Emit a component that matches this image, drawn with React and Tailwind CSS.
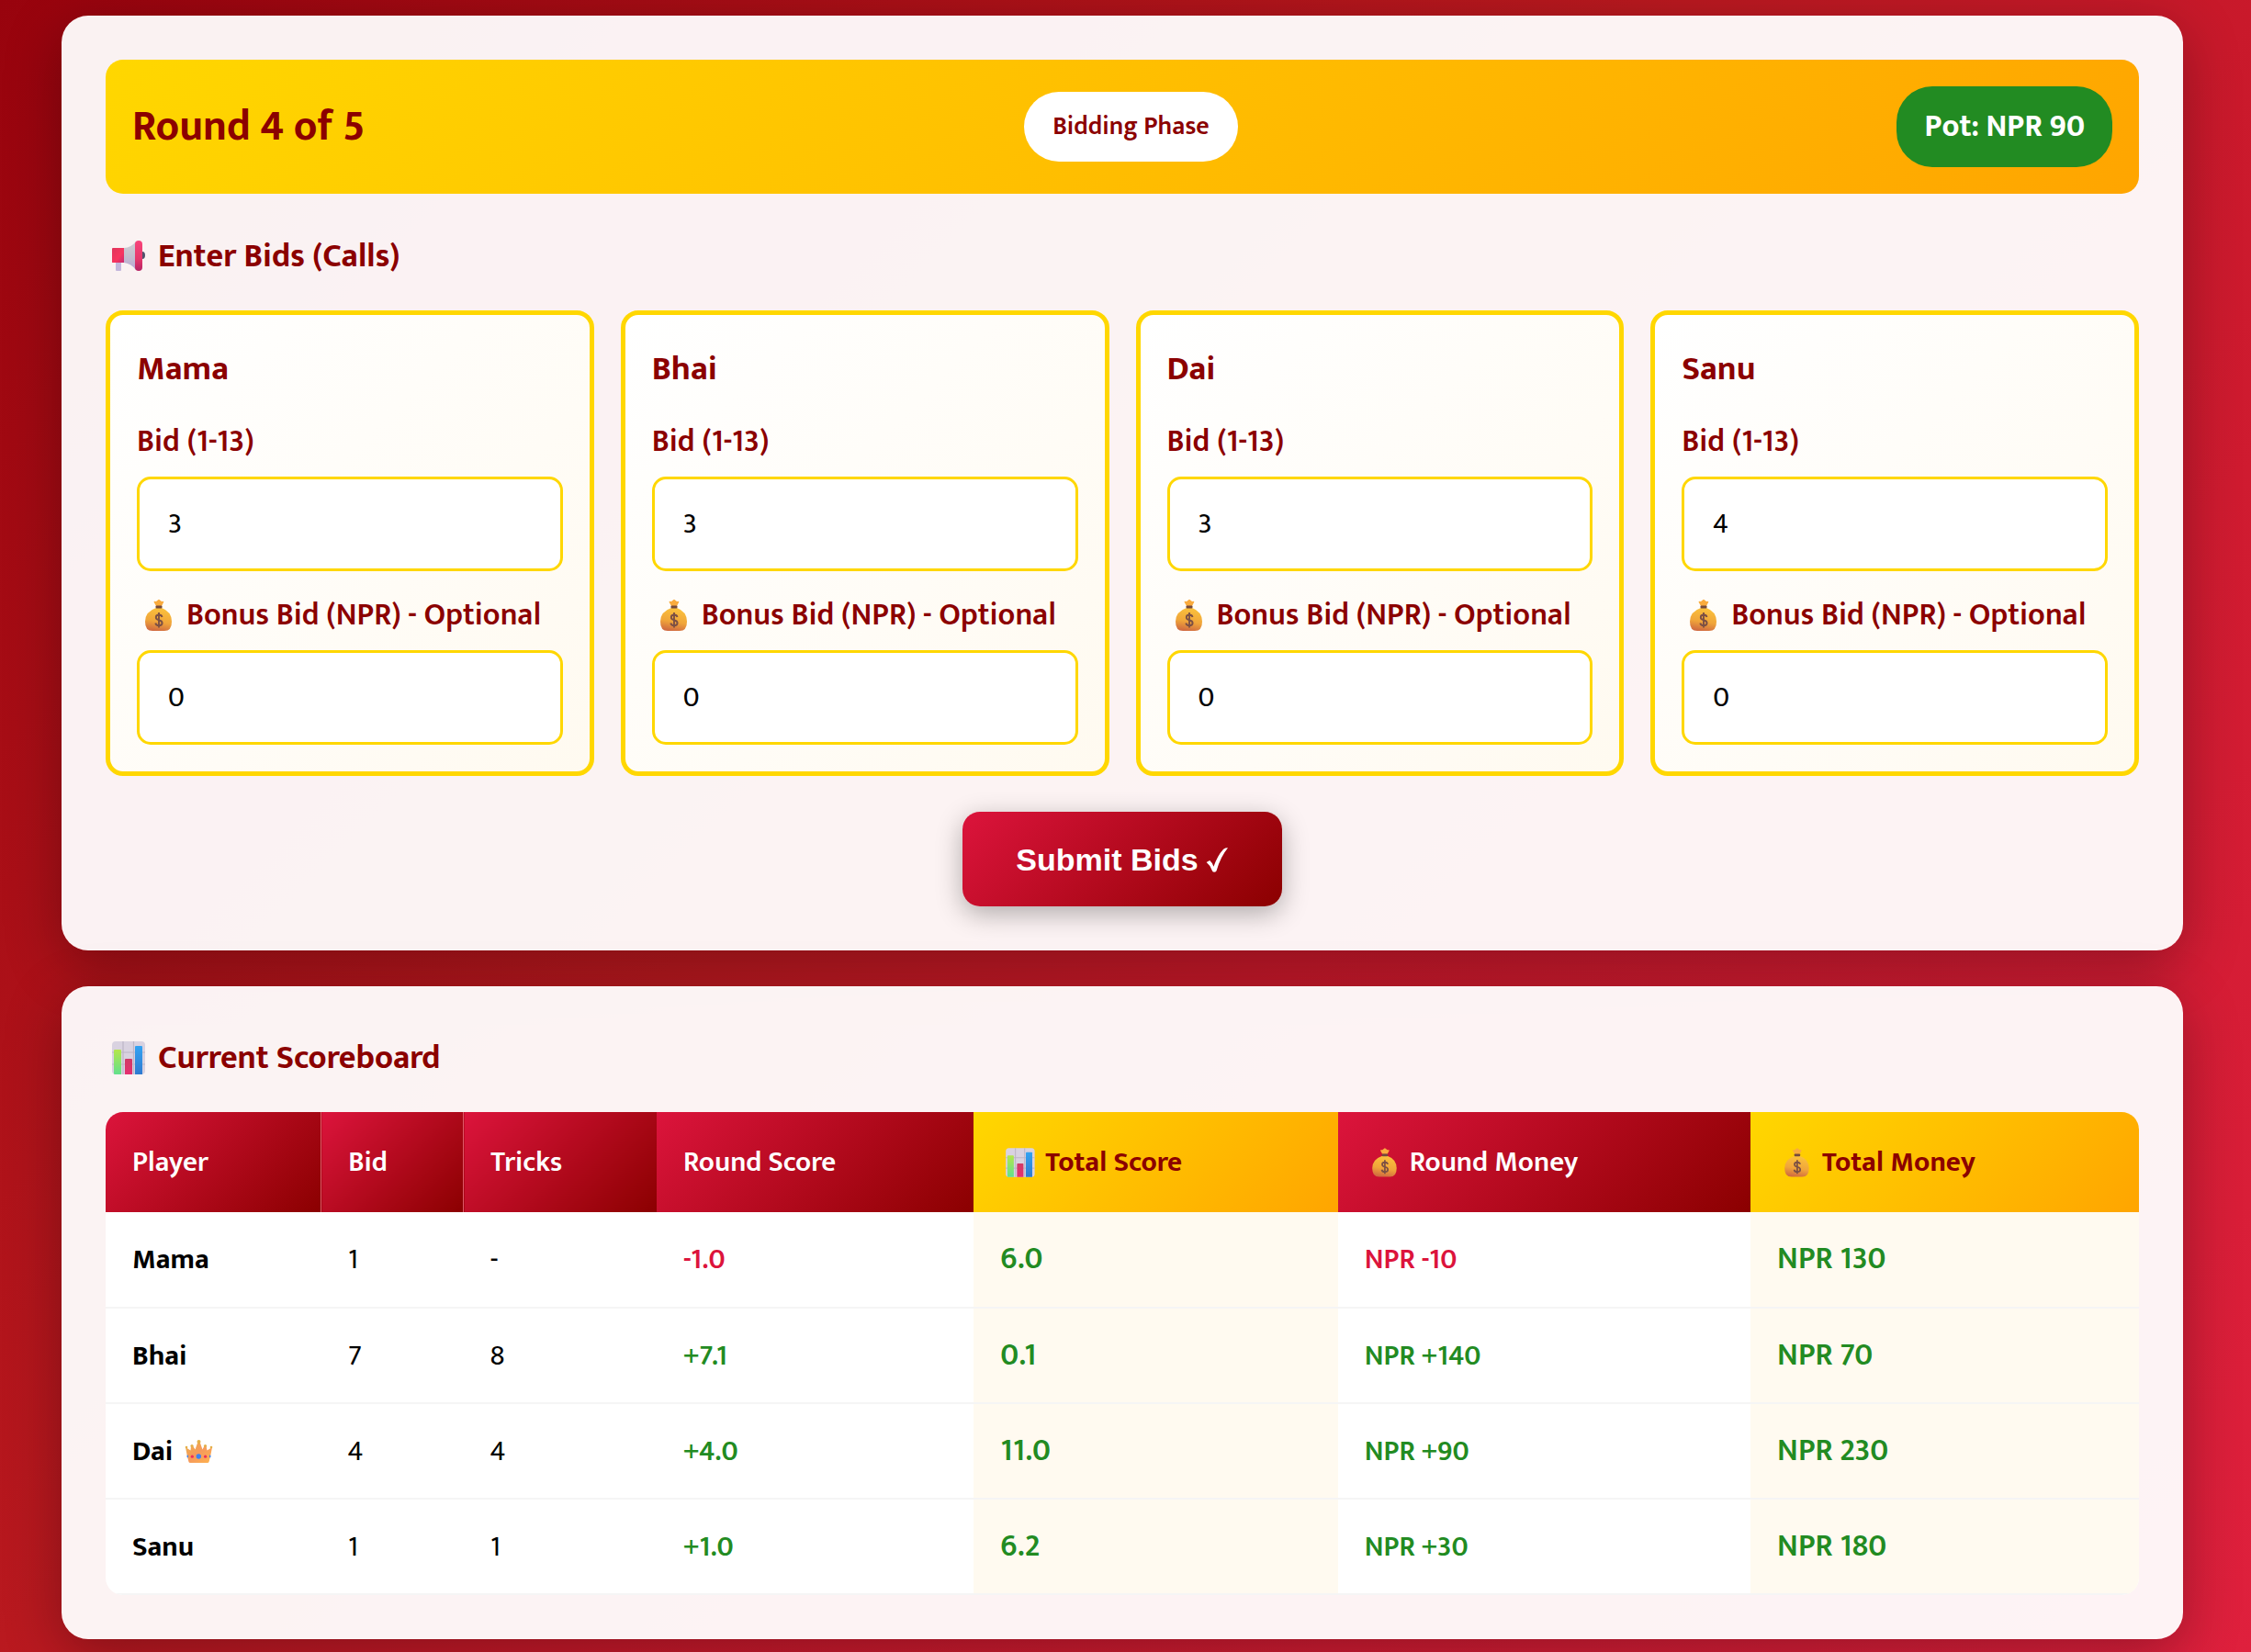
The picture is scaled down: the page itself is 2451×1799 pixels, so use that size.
import React from "react";

const players = [
  { name: "Mama", bid: 3, bonus: 0 },
  { name: "Bhai", bid: 3, bonus: 0 },
  { name: "Dai", bid: 3, bonus: 0 },
  { name: "Sanu", bid: 4, bonus: 0 },
];

const scores = [
  { name: "Mama", bid: "1", tricks: "-", round: "-1.0", total: "6.0", money: "NPR -10", totalMoney: "NPR 130", lost: true },
  { name: "Bhai", bid: "7", tricks: "8", round: "+7.1", total: "0.1", money: "NPR +140", totalMoney: "NPR 70" },
  { name: "Dai", bid: "4", tricks: "4", round: "+4.0", total: "11.0", money: "NPR +90", totalMoney: "NPR 230", leader: true },
  { name: "Sanu", bid: "1", tricks: "1", round: "+1.0", total: "6.2", money: "NPR +30", totalMoney: "NPR 180" },
];

function Megaphone({ className }) {
  return (
    <svg viewBox="5 4 48 48" className={className} aria-hidden="true">
      <defs>
        <linearGradient id="mgBody" x1="0" y1="0" x2="1" y2="1">
          <stop offset="0" stopColor="#e0355c" />
          <stop offset="0.6" stopColor="#f8355f" />
          <stop offset="1" stopColor="#c42a72" />
        </linearGradient>
        <linearGradient id="mgCone" x1="0" y1="0" x2="0" y2="1">
          <stop offset="0" stopColor="#cfcdd2" />
          <stop offset="0.5" stopColor="#c4c0cf" />
          <stop offset="1" stopColor="#b9a6d6" />
        </linearGradient>
        <linearGradient id="mgRim" x1="0" y1="0" x2="0" y2="1">
          <stop offset="0" stopColor="#f8447a" />
          <stop offset="0.6" stopColor="#e6386c" />
          <stop offset="1" stopColor="#b52265" />
        </linearGradient>
      </defs>
      <rect x="16" y="34" width="6" height="10" rx="1" fill="#c3b6dc" />
      <ellipse cx="45" cy="27" rx="3" ry="4" fill="#50506a" />
      <path d="M25 19Q33 18.500 38 12V43Q33 36 25 35Z" fill="url(#mgCone)" />
      <path d="M12 19.500Q12 19 13 19H25V35H13Q12 35 12 34.500Z" fill="url(#mgBody)" />
      <rect x="37" y="11" width="8" height="33" rx="4" fill="url(#mgRim)" />
    </svg>
  );
}

function BarChart({ className }) {
  return (
    <svg viewBox="5 6 48 48" className={className} aria-hidden="true">
      <defs>
        <linearGradient id="chGreen" x1="0" y1="0" x2="0" y2="1">
          <stop offset="0" stopColor="#b4e64a" />
          <stop offset="1" stopColor="#62e08c" />
        </linearGradient>
        <linearGradient id="chPink" x1="0" y1="0" x2="0" y2="1">
          <stop offset="0" stopColor="#d03a66" />
          <stop offset="1" stopColor="#e62f70" />
        </linearGradient>
        <linearGradient id="chBlue" x1="0" y1="0" x2="0" y2="1">
          <stop offset="0" stopColor="#33a3f2" />
          <stop offset="1" stopColor="#2f7ad0" />
        </linearGradient>
      </defs>
      <rect x="12" y="12" width="36" height="36" rx="4" fill="#d9d2e0" />
      <path d="M24 12V48M35.500 12V48M12 24H48M12 37H48" stroke="#bdb6c6" strokeWidth="1.200" fill="none" />
      <path d="M14 22Q14 21 15 21H21Q22 21 22 22V48H15Q14 48 14 47Z" fill="url(#chGreen)" />
      <path d="M26 32Q26 31 27 31H33Q34 31 34 32V48H26Z" fill="url(#chPink)" />
      <path d="M37 18Q37 17 38 17H44Q45 17 45 18V48H37Z" fill="url(#chBlue)" />
    </svg>
  );
}

function MoneyBag({ className }) {
  return (
    <svg viewBox="4 5 46 46" className={className} aria-hidden="true">
      <defs>
        <linearGradient id="bagBody" x1="0.6" y1="0" x2="0.4" y2="1">
          <stop offset="0" stopColor="#fbc23c" />
          <stop offset="0.6" stopColor="#f0a53a" />
          <stop offset="1" stopColor="#d06a40" />
        </linearGradient>
      </defs>
      <path d="M25 18L22.500 13.500Q22.500 12.500 25 13L27.500 11Q28 10.700 28.500 11L31 13Q33.500 12.500 33.300 13.500L31 18Z" fill="#f9ab3e" />
      <path d="M25 20H31Q42 24 42 35Q42 45 34 45H21Q13 45 13 35Q13 24 25 20Z" fill="url(#bagBody)" />
      <rect x="24.500" y="17.500" width="7" height="3" rx="1" fill="#74493d" />
      <path d="M31.500 30Q31 27.500 28 27.500Q24.800 27.500 24.800 30.200Q24.800 32.500 28 33.200Q31.600 34 31.600 36.500Q31.600 39.200 28 39.200Q24.800 39.200 24.300 36.500M28 25V41.500" fill="none" stroke="#7c5044" strokeWidth="1.900" />
    </svg>
  );
}

function Crown({ className }) {
  return (
    <svg viewBox="5 -2 42 42" className={className} aria-hidden="true">
      <defs>
        <linearGradient id="crBody" x1="0" y1="0" x2="1" y2="1">
          <stop offset="0" stopColor="#eab04a" />
          <stop offset="0.5" stopColor="#f69a5c" />
          <stop offset="1" stopColor="#ffb44e" />
        </linearGradient>
      </defs>
      <path d="M12 15L17.500 18.500L18 13.500H20L22.500 17.500L25.500 9H27.500L30.500 17.500L32.500 13.500H34.500L35.500 18.500L41 15Q39.500 24 37.500 31Q37.200 32 36 32H17Q15.800 32 15.500 31Q13.500 24 12 15Z" fill="url(#crBody)" />
      <circle cx="26.500" cy="9" r="2" fill="#e3b04a" />
      <circle cx="19" cy="13.500" r="1.600" fill="#e3b04a" />
      <circle cx="33.500" cy="13.500" r="1.600" fill="#e3b04a" />
      <circle cx="13" cy="15" r="1.300" fill="#e3b04a" />
      <circle cx="40" cy="15" r="1.300" fill="#e3b04a" />
      <circle cx="26.300" cy="25" r="2.700" fill="#3d82ee" />
      <circle cx="19.300" cy="25.200" r="1.600" fill="#ee2f5c" />
      <circle cx="33.600" cy="25.200" r="1.600" fill="#ee2f5c" />
      <ellipse cx="14.300" cy="25" rx="0.800" ry="1.400" fill="#3d82ee" />
      <ellipse cx="38.700" cy="25" rx="0.800" ry="1.400" fill="#3d82ee" />
    </svg>
  );
}

function CheckMark({ className }) {
  return (
    <svg viewBox="941 221 75 83" className={className} aria-hidden="true">
      <path d="M942 270L953 264Q961 270 966 285Q979 247 999 226Q1005 222 1014 222Q989 252 976 298Q975 303 968 303Q962 303 961 298Q955 280 942 270Z" fill="currentColor" />
    </svg>
  );
}

function Panel({ children }) {
  return (
    <section className="rounded-[29px] bg-white/95 p-12 shadow-[0_16px_62px_rgba(0,0,0,0.3)]">{children}</section>
  );
}

function Field({ id, label, icon, value }) {
  return (
    <div className="mt-5">
      <label htmlFor={id} className="flex items-center gap-2 text-[34px] leading-[56px] font-semibold text-[#8b0000]">
        {icon}
        {label}
      </label>
      <input
        id={id}
        type="number"
        defaultValue={value}
        className="mt-2.5 block h-[103px] w-full rounded-[15px] border-3 border-[#ffd700] bg-white px-[31px] text-[31px] text-black"
      />
    </div>
  );
}

function PlayerCard({ player }) {
  const id = player.name.toLowerCase();
  return (
    <article className="rounded-[19px] border-5 border-[#ffd700] bg-linear-[135deg,#ffffff,#fffaf0] p-[29px]">
      <h4 className="text-[37px] leading-[61px] font-bold text-[#8b0000]">{player.name}</h4>
      <Field id={`${id}-bid`} label="Bid (1-13)" value={player.bid} />
      <Field
        id={`${id}-bonus`}
        label="Bonus Bid (NPR) - Optional"
        icon={<MoneyBag className="size-[46px] shrink-0" />}
        value={player.bonus}
      />
    </article>
  );
}

function HeadCell({ children, gold, line = "" }) {
  const tone = gold
    ? "bg-linear-[135deg,#ffd700,#ffa500] font-bold text-[#8b0000]"
    : "bg-linear-[135deg,#dc143c,#8b0000] font-semibold text-white";
  return (
    <th scope="col" className={`${tone} ${line} px-[29px] py-[29px] text-left`}>
      <span className="flex items-center gap-[7px]">{children}</span>
    </th>
  );
}

export default function App() {
  return (
    <div className="min-h-screen bg-linear-[135deg,#98030d,#b9191f_42%,#c9192b_58%,#df203d] pt-[17px] pr-[74px] pb-3 pl-[67px] font-['Mukta','Open_Sans',sans-serif] text-black">
      <main className="flex flex-col gap-[39px]">
        <Panel>
          <header className="flex items-center justify-between rounded-[19px] bg-linear-[135deg,#ffd700,#ffa500] p-[29px]">
            <h2 className="text-[46px] leading-[76px] font-bold text-[#8b0000]">Round 4 of 5</h2>
            <span className="rounded-[39px] bg-white px-[31px] py-[15px] text-[28px] leading-[46px] font-semibold text-[#8b0000]">
              Bidding Phase
            </span>
            <span className="rounded-[39px] bg-[#228b22] px-[30px] py-4 text-[34px] leading-[56px] font-bold text-white">
              Pot: NPR 90
            </span>
          </header>

          <h3 className="mt-[38px] flex items-center gap-[9px] text-[36px] leading-[60px] font-bold text-[#8b0000]">
            <Megaphone className="size-12 shrink-0" />
            Enter Bids (Calls)
          </h3>

          <div className="mt-[29px] grid grid-cols-4 gap-[29px]">
            {players.map((p) => (
              <PlayerCard key={p.name} player={p} />
            ))}
          </div>

          <div className="mt-[39px] flex justify-center">
            <button
              type="button"
              className="flex items-center gap-2 rounded-[19px] bg-linear-[135deg,#dc143c,#8b0000] px-[58px] pt-[30px] pb-7 font-['Liberation_Sans',Arial,sans-serif] text-[34px] leading-[45px] font-bold text-white shadow-[0_8px_29px_rgba(0,0,0,0.3)]"
            >
              Submit Bids
              <CheckMark className="h-[27px] w-[25px]" />
            </button>
          </div>
        </Panel>

        <Panel>
          <h3 className="flex items-center gap-[9px] text-[36px] leading-[60px] font-bold text-[#8b0000]">
            <BarChart className="size-12 shrink-0" />
            Current Scoreboard
          </h3>

          <div className="mt-[29px] overflow-hidden rounded-[19px]">
            <table className="w-full table-fixed border-collapse bg-white text-[31px] leading-[51px]">
              <colgroup>
                <col className="w-[10.6%]" />
                <col className="w-[7%]" />
                <col className="w-[9.5%]" />
                <col className="w-[15.6%]" />
                <col className="w-[17.9%]" />
                <col className="w-[20.3%]" />
                <col />
              </colgroup>
              <thead>
                <tr>
                  <HeadCell>Player</HeadCell>
                  <HeadCell line="border-l border-[#dd5a68]">Bid</HeadCell>
                  <HeadCell line="border-l border-[#dd5a68]">Tricks</HeadCell>
                  <HeadCell>Round Score</HeadCell>
                  <HeadCell gold>
                    <BarChart className="size-[42px] shrink-0" />
                    Total Score
                  </HeadCell>
                  <HeadCell>
                    <MoneyBag className="size-[42px] shrink-0" />
                    Round Money
                  </HeadCell>
                  <HeadCell gold>
                    <MoneyBag className="size-[42px] shrink-0" />
                    Total Money
                  </HeadCell>
                </tr>
              </thead>
              <tbody>
                {scores.map((s) => {
                  const tone = s.lost ? "text-[#dc143c]" : "text-[#228b22]";
                  return (
                    <tr key={s.name} className="h-[104px] border-b-2 border-[#f5f5f5]">
                      <th scope="row" className="px-[29px] text-left font-bold">
                        <span className="flex items-center gap-[7px]">
                          {s.name}
                          {s.leader && <Crown className="size-[42px] shrink-0" />}
                        </span>
                      </th>
                      <td className="px-[29px]">{s.bid}</td>
                      <td className="px-[29px]">{s.tricks}</td>
                      <td className={`${tone} px-[29px] font-semibold`}>{s.round}</td>
                      <td className="bg-[#fffaf0] px-[29px] text-[34px] font-semibold text-[#228b22]">{s.total}</td>
                      <td className={`${tone} px-[29px] font-semibold`}>{s.money}</td>
                      <td className="bg-[#fffaf0] px-[29px] text-[34px] font-semibold text-[#228b22]">{s.totalMoney}</td>
                    </tr>
                  );
                })}
              </tbody>
            </table>
          </div>
        </Panel>
      </main>
    </div>
  );
}
